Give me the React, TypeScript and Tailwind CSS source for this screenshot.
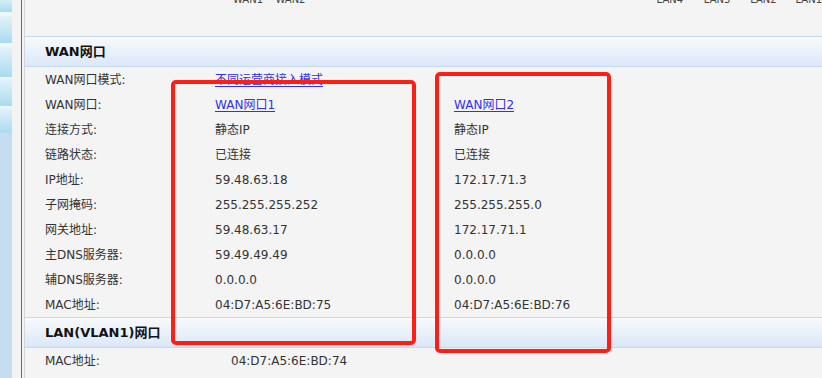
import React from 'react';

type Row = { label: string; wan1: string; wan2: string; link?: boolean };

const wanRows: Row[] = [
    { label: 'WAN网口模式:', wan1: '不同运营商接入模式', wan2: '', link: true },
    { label: 'WAN网口:', wan1: 'WAN网口1', wan2: 'WAN网口2', link: true },
    { label: '连接方式:', wan1: '静态IP', wan2: '静态IP' },
    { label: '链路状态:', wan1: '已连接', wan2: '已连接' },
    { label: 'IP地址:', wan1: '59.48.63.18', wan2: '172.17.71.3' },
    { label: '子网掩码:', wan1: '255.255.255.252', wan2: '255.255.255.0' },
    { label: '网关地址:', wan1: '59.48.63.17', wan2: '172.17.71.1' },
    { label: '主DNS服务器:', wan1: '59.49.49.49', wan2: '0.0.0.0' },
    { label: '辅DNS服务器:', wan1: '0.0.0.0', wan2: '0.0.0.0' },
    { label: 'MAC地址:', wan1: '04:D7:A5:6E:BD:75', wan2: '04:D7:A5:6E:BD:76' },
];

const SectionHeader: React.FC<{ title: string }> = ({ title }) => (
    <div className="flex h-[31px] items-center border-y border-y-[#c6daee] bg-gradient-to-b from-[#f8fafd] to-[#dbe7f8] pl-[20px] text-[13px] font-bold text-[#111]">
        {title}
    </div>
);

const Value: React.FC<{ text: string; link?: boolean }> = ({ text, link }) =>
    link ? (
        <span className="text-[#3030f0] underline underline-offset-2">{text}</span>
    ) : (
        <span>{text}</span>
    );

const App: React.FC = () => {
    return (
        <div
            className="relative flex h-[378px] w-[822px] overflow-hidden bg-[#f4f4f4] text-[12px] text-[#333]"
            style={{ fontFamily: '"DejaVu Sans", "Noto Sans CJK SC", sans-serif' }}
        >
            {/* left nav strip */}
            <div className="flex w-[12px] shrink-0 flex-col bg-[#c6dcef]">
                <div className="h-[12px] bg-gradient-to-b from-[#d4eef8] to-[#a9dbef]" />
                <div className="h-[4px] bg-[#eef7fb]" />
                <div className="h-[27px] bg-gradient-to-b from-[#e2f3fa] to-[#a9dbef]" />
                <div className="h-[4px] bg-[#eef7fb]" />
                <div className="h-[30px] bg-gradient-to-b from-[#e2f3fa] to-[#a9dbef]" />
                <div className="h-[2px] bg-[#eef7fb]" />
                <div className="h-[27px] bg-gradient-to-b from-[#e2f3fa] to-[#a9dbef]" />
                <div className="h-[2px] bg-[#eef7fb]" />
                <div className="h-[25px] bg-gradient-to-b from-[#e2f3fa] to-[#a9dbef]" />
            </div>
            <div className="w-[9px] shrink-0 bg-[#f3f3f3]" />
            <div className="w-[1px] shrink-0 bg-[#2f72d6]" />
            <div className="w-[2px] shrink-0 bg-[#f3f3f3]" />
            <div className="w-[1px] shrink-0 bg-[#d6d6d6]" />

            <div className="flex min-w-0 flex-1 flex-col">
                <div className="h-[36px] shrink-0">
                    <div className="-mt-[8px] flex whitespace-nowrap text-[10px] text-[#444]">
                        <span className="ml-[208px] w-[44px]">WAN1</span>
                        <span className="w-[395px]">WAN2</span>
                        <span className="w-[49px]">LAN4</span>
                        <span className="w-[48px]">LAN3</span>
                        <span className="w-[47px]">LAN2</span>
                        <span>LAN1</span>
                    </div>
                </div>

                <SectionHeader title="WAN网口" />
                {wanRows.map(row => (
                    <div key={row.label} className="flex h-[25px] shrink-0 items-center whitespace-nowrap">
                        <div className="w-[190px] shrink-0 pl-[20px]">{row.label}</div>
                        <div className="w-[239px] shrink-0">
                            <Value text={row.wan1} link={row.link} />
                        </div>
                        <div>{row.wan2 && <Value text={row.wan2} link={row.link} />}</div>
                    </div>
                ))}

                <SectionHeader title="LAN(VLAN1)网口" />
                <div className="flex h-[25px] shrink-0 items-center whitespace-nowrap">
                    <div className="w-[206px] shrink-0 pl-[20px]">MAC地址:</div>
                    <div>04:D7:A5:6E:BD:74</div>
                </div>
            </div>

            {/* red annotation boxes */}
            <div className="absolute left-[171px] top-[80px] h-[265px] w-[245px] rounded-[5px] border-4 border-[#ff1e14]" />
            <div className="absolute left-[435px] top-[72px] h-[281px] w-[176px] rounded-[5px] border-4 border-[#ff1e14]" />
        </div>
    );
};

export default App;
